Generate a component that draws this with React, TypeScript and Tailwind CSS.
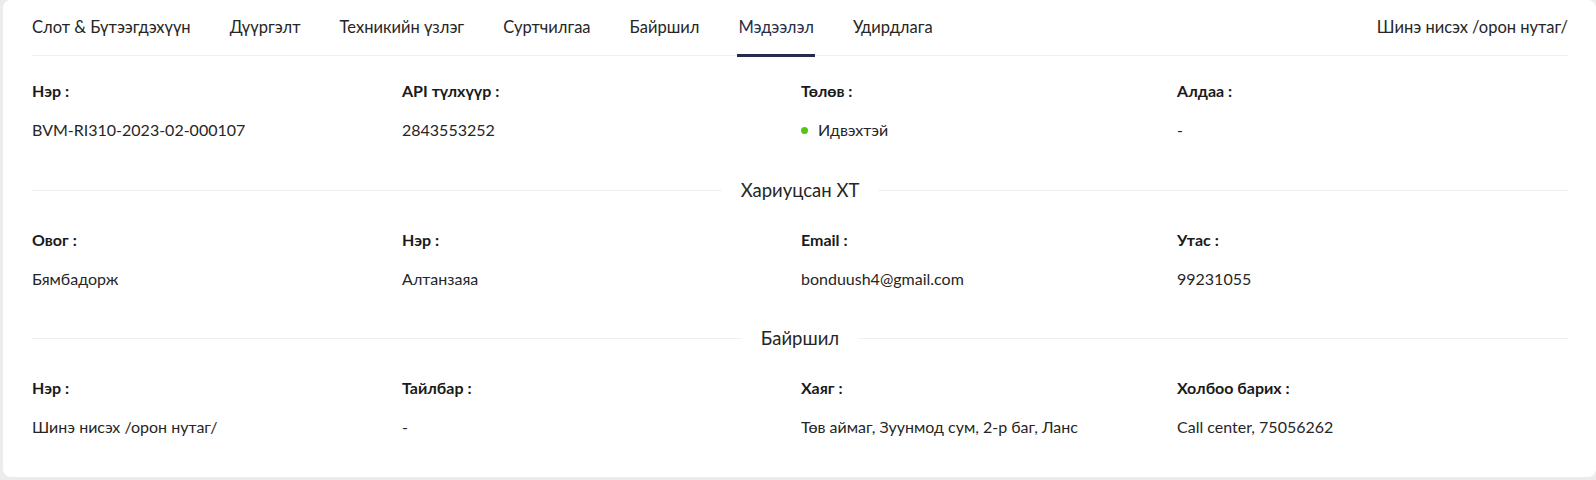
import React from 'react'

interface Field {
  label: string
  value: string
  dot?: boolean
}

const tabs = [
  'Слот & Бүтээгдэхүүн',
  'Дүүргэлт',
  'Техникийн үзлэг',
  'Суртчилгаа',
  'Байршил',
  'Мэдээлэл',
  'Удирдлага',
]

const general: Field[] = [
  { label: 'Нэр', value: 'BVM-RI310-2023-02-000107' },
  { label: 'API түлхүүр', value: '2843553252' },
  { label: 'Төлөв', value: 'Идвэхтэй', dot: true },
  { label: 'Алдаа', value: '-' },
]

const responsible: Field[] = [
  { label: 'Овог', value: 'Бямбадорж' },
  { label: 'Нэр', value: 'Алтанзаяа' },
  { label: 'Email', value: 'bonduush4@gmail.com' },
  { label: 'Утас', value: '99231055' },
]

const location: Field[] = [
  { label: 'Нэр', value: 'Шинэ нисэх /орон нутаг/' },
  { label: 'Тайлбар', value: '-' },
  { label: 'Хаяг', value: 'Төв аймаг, Зуунмод сум, 2-р баг, Ланс' },
  { label: 'Холбоо барих', value: 'Call center, 75056262' },
]

function FieldRow({ fields }: { fields: Field[] }) {
  return (
    <div className="grid grid-cols-[370px_399px_376px_1fr]">
      {fields.map((f) => (
        <div key={f.label} className="flex flex-col gap-[17px]">
          <div className="h-[22px] leading-[22px] font-bold text-[#1a1a1a]">{f.label} :</div>
          <div className="h-[22px] leading-[22px] flex items-center text-[#262626]">
            {f.dot && <span className="mr-[10px] h-[7px] w-[7px] rounded-full bg-[#52c41a]" />}
            {f.value}
          </div>
        </div>
      ))}
    </div>
  )
}

function SectionDivider({ title }: { title: string }) {
  return (
    <div className="flex items-center h-[24px]">
      <div className="flex-1 h-px bg-[#f0f0f0]" />
      <div className="px-[19px] text-[18.5px] leading-[24px] text-[#262626]">{title}</div>
      <div className="flex-1 h-px bg-[#f0f0f0]" />
    </div>
  )
}

export default function App() {
  return (
    <div className="min-h-screen bg-[#ececec] pl-[3px] font-['Lato','Roboto',sans-serif] text-[16px]">
      <div className="h-[477px] bg-white rounded-lg pl-[29px] pr-[28px]">
        <div className="h-[56px] flex items-center gap-[39px] border-b border-[#f0f0f0] text-[16.5px]">
          {tabs.map((t) => (
            <div key={t} className={`relative h-full flex items-center ${t === 'Мэдээлэл' ? 'text-[#2a2d4a]' : 'text-[#262626]'}`}>
              {t}
              {t === 'Мэдээлэл' && (
                <span className="absolute left-[-1px] right-[-1px] bottom-[-2px] h-[3px] bg-[#272a4a]" />
              )}
            </div>
          ))}
          <div className="ml-auto text-[#262626]">Шинэ нисэх /орон нутаг/</div>
        </div>

        <div className="pt-[24px]">
          <FieldRow fields={general} />
        </div>
        <div className="mt-[37px]">
          <SectionDivider title="Хариуцсан ХТ" />
        </div>
        <div className="mt-[27px]">
          <FieldRow fields={responsible} />
        </div>
        <div className="mt-[36px]">
          <SectionDivider title="Байршил" />
        </div>
        <div className="mt-[27px]">
          <FieldRow fields={location} />
        </div>
      </div>
    </div>
  )
}
